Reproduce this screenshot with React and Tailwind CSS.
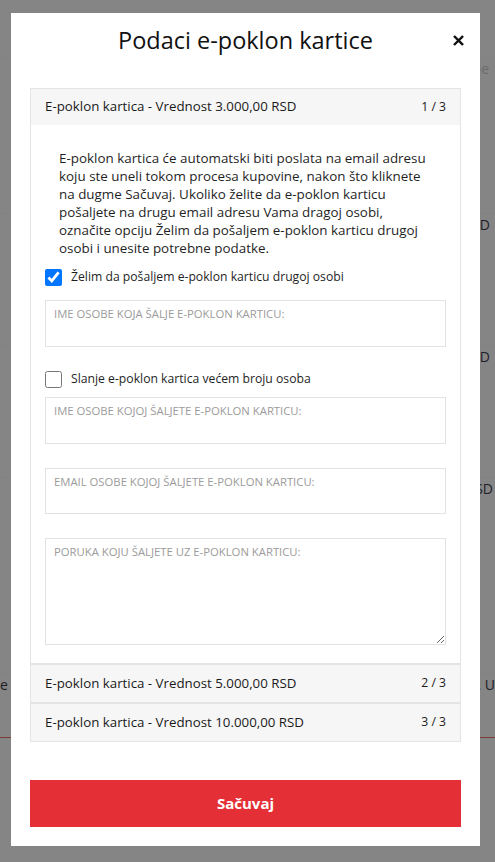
import React from 'react';

const cards = [
    { label: 'E-poklon kartica - Vrednost 3.000,00 RSD', index: '1 / 3', open: true },
    { label: 'E-poklon kartica - Vrednost 5.000,00 RSD', index: '2 / 3' },
    { label: 'E-poklon kartica - Vrednost 10.000,00 RSD', index: '3 / 3' },
];

function BackgroundPage() {
    // page behind the dimmed overlay, only its edges peek out
    return (
        <div className="flex flex-col w-full text-[14px] text-[#1e1e28]">
            <div className="h-[58px] border-b border-[#828282]" />
            <div className="h-[40px] flex justify-end pr-[6px] text-[#6c6c6c]">pe</div>
            <div className="h-[116px] border-b border-[#828282]" />
            <div className="h-[132px] flex justify-end pr-[5px] border-b border-[#828282]">RSD</div>
            <div className="h-[132px] flex justify-end pr-[5px] border-b border-[#828282]">RSD</div>
            <div className="h-[196px] flex justify-end pr-[2px] border-b border-[#828282]">RSD</div>
            <div className="h-[63px] flex justify-between items-start">
                <span>e</span>
                <span>. U</span>
            </div>
            <div className="h-px bg-[#7a3b3b]" />
        </div>
    );
}

function Field({ placeholder, height }) {
    return (
        <textarea
            placeholder={placeholder}
            className={`block w-full border border-[#e3e3e3] px-[8px] pt-[5px] text-[11.3px] leading-[16px] uppercase placeholder:text-[#9b9b9b] outline-none ${height} ${height === 'h-[107px]' ? 'resize-y' : 'resize-none'}`}
        />
    );
}

function CardBody() {
    return (
        <div className="pt-[24px] px-[14px] pb-[18px]">
            <p className="px-[14px] text-[13.4px] leading-[18px] text-[#1f1f1f]">
                E-poklon kartica će automatski biti poslata na email adresu koju ste uneli tokom procesa kupovine, nakon što kliknete na dugme Sačuvaj. Ukoliko želite da e-poklon karticu pošaljete na drugu email adresu Vama dragoj osobi, označite opciju Želim da pošaljem e-poklon karticu drugoj osobi i unesite potrebne podatke.
            </p>

            <label className="mt-[11px] flex items-center gap-[9px] text-[12.2px] leading-[18px] text-[#1f1f1f]">
                <input type="checkbox" defaultChecked className="m-0 w-[17px] h-[17px]" />
                Želim da pošaljem e-poklon karticu drugoj osobi
            </label>

            <div className="mt-[14px]">
                <Field placeholder="Ime osobe koja šalje e-poklon karticu:" height="h-[47px]" />
            </div>

            <label className="mt-[23px] flex items-center gap-[9px] text-[12.2px] leading-[18px] text-[#1f1f1f]">
                <input type="checkbox" className="m-0 w-[17px] h-[17px]" />
                Slanje e-poklon kartica većem broju osoba
            </label>

            <div className="mt-[9px] flex flex-col gap-[24px]">
                <Field placeholder="Ime osobe kojoj šaljete e-poklon karticu:" height="h-[47px]" />
                <Field placeholder="Email osobe kojoj šaljete e-poklon karticu:" height="h-[46px]" />
                <Field placeholder="Poruka koju šaljete uz e-poklon karticu:" height="h-[107px]" />
            </div>
        </div>
    );
}

export default function App() {
    return (
        <div className="relative w-full h-[862px] overflow-hidden bg-[#858585] font-['Open_Sans',sans-serif]">
            <BackgroundPage />

            {/* Modal */}
            <div className="absolute left-[11px] top-[13px] w-[469px] bg-white px-[19px] pt-[12px] pb-[19px]">
                <div className="relative">
                    <h2 className="text-center text-[23.5px] leading-[30px] text-[#111]">Podaci e-poklon kartice</h2>
                    <button className="absolute right-[-3px] top-[10px] text-[#111]">
                        <svg className="w-[11px] h-[11px]" viewBox="0 0 12 12" fill="none" stroke="currentColor" strokeWidth={2.6} strokeLinecap="square">
                            <path d="M2 2l8 8M10 2l-8 8" />
                        </svg>
                    </button>
                </div>

                {/* Accordion */}
                <div className="mt-[33px] border border-[#e4e4e4]">
                    {cards.map((card, i) => (
                        <div key={card.index} className={i > 0 ? 'border-t-2 border-[#e4e4e4]' : ''}>
                            <div className={`${i > 0 ? 'h-[37px]' : 'h-[36px]'} flex items-center justify-between px-[14px] bg-[#f6f6f6] text-[#1a1a1a]`}>
                                <span className="text-[13.3px]">{card.label}</span>
                                <span className="text-[12.2px]">{card.index}</span>
                            </div>
                            {card.open && <CardBody />}
                        </div>
                    ))}
                </div>

                <button className="mt-[38px] w-full h-[47px] bg-[#e32f35] text-white text-[15px] font-bold">
                    Sačuvaj
                </button>
            </div>
        </div>
    );
}
